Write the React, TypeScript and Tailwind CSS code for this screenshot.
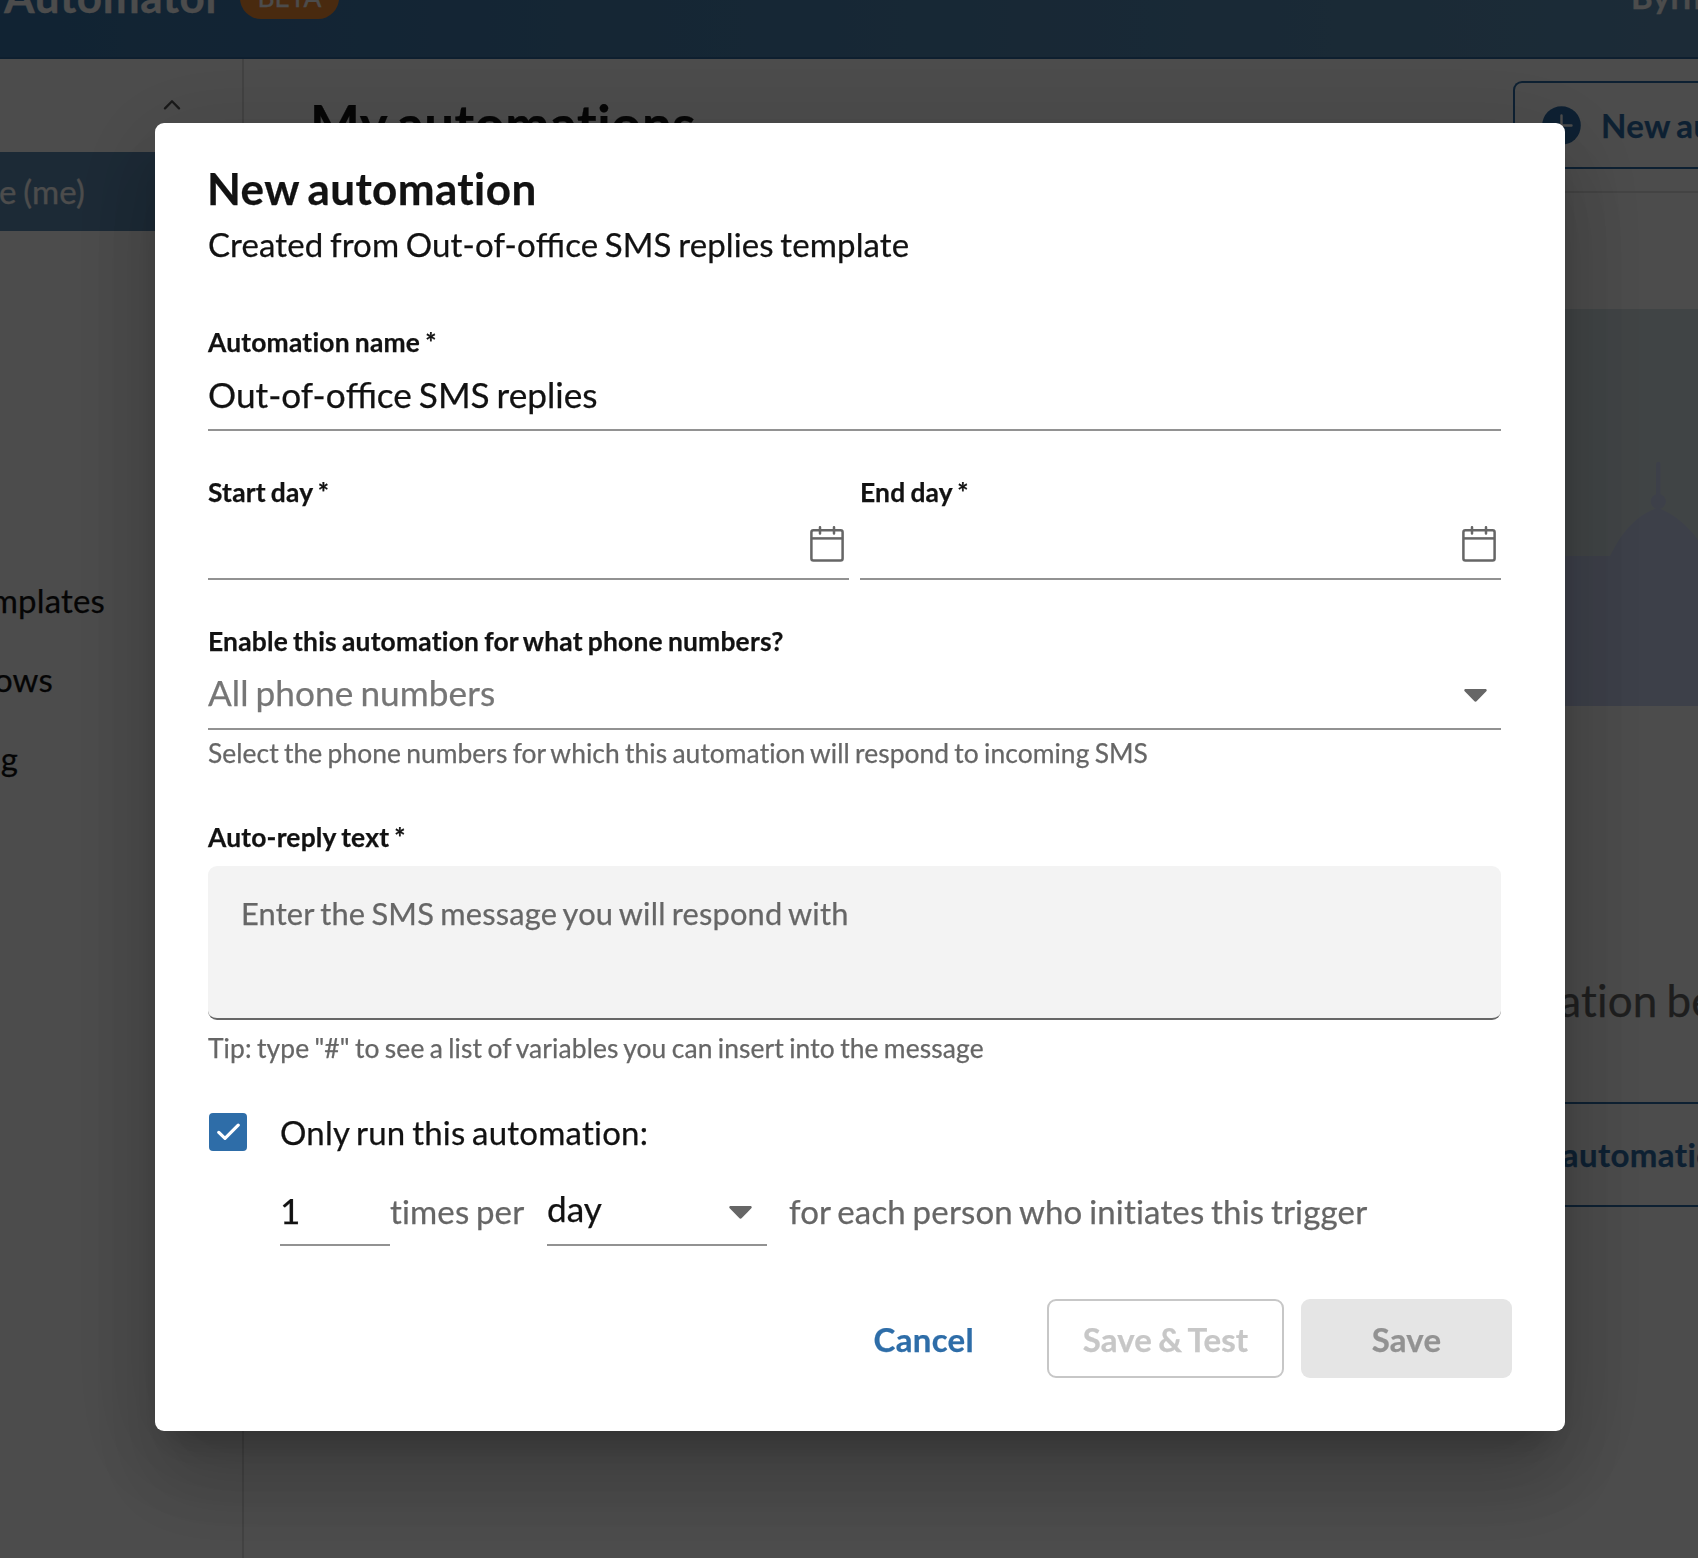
import React from "react";

function CalendarIcon() {
  return (
    <svg width="34" height="36" viewBox="0 0 34 36" fill="none" stroke="#666666" strokeWidth="2.5">
      <rect x="1.4" y="4.2" width="31.2" height="30.2" rx="2" />
      <path d="M1.4 12.4H32.6" />
      <path d="M10 1.2V7.4M24 1.2V7.4" strokeLinecap="round" />
    </svg>
  );
}

function Caret() {
  return (
    <svg width="23" height="13" viewBox="0 0 23 13" fill="#666666">
      <path d="M1.6 0H21.4C22.7 0 23.2 1.4 22.3 2.3L12.8 12.1C12.1 12.9 10.9 12.9 10.2 12.1L0.7 2.3C-0.2 1.4 0.3 0 1.6 0Z" />
    </svg>
  );
}

function Office() {
  return (
    <>
      Out-of-o<span className="tracking-normal [font-variant-ligatures:normal]">ffi</span>ce
    </>
  );
}

function Label({ children }: { children: React.ReactNode }) {
  return <label className="block text-[26.4px] leading-8 font-bold tracking-[0.21px]">{children}</label>;
}

function Background() {
  return (
    <div className="flex h-full w-full flex-col bg-white">
      <header className="flex h-[59px] shrink-0 justify-between overflow-hidden border-b-2 border-[#2f6a9f] bg-linear-to-r from-[#3976ab] to-[#5f92b8] text-white">
        <div className="-mt-[27px] flex items-start pl-1">
          <span className="w-[236px] text-[44px] leading-[46px] font-bold tracking-[0.6px]">Automator</span>
          <span className="mt-1 flex h-[42px] w-[99px] items-center justify-center rounded-full bg-[#f58c35] text-[26.4px]">
            BETA
          </span>
        </div>
        <div className="-mt-6 w-[67px] text-[33px] leading-10 font-bold tracking-[0.3px] whitespace-nowrap">Byrne</div>
      </header>

      <div className="flex min-h-0 flex-1">
        <aside className="flex w-[244px] shrink-0 flex-col border-r-2 border-[#dcdcdc] text-[33px] leading-10 tracking-[0.16px] text-[#121212]">
          <div className="flex h-[93px] justify-end pt-10 pr-[61px]">
            <svg width="18" height="11" viewBox="0 0 18 11" fill="none" stroke="#555555" strokeWidth="2.3">
              <path d="M2 9.4L9 2.2L16 9.4" strokeLinecap="round" strokeLinejoin="round" />
            </svg>
          </div>
          <div className="h-[79px] bg-[#5f8cb4] pt-[19px] text-white">
            <div className="flex w-[85px] justify-end whitespace-nowrap">Byrne (me)</div>
          </div>
          <nav className="mt-[349px] flex flex-col gap-[39px]">
            <div className="flex w-[105px] justify-end whitespace-nowrap">Templates</div>
            <div className="flex w-[53px] justify-end">ows</div>
            <div className="flex w-[18px] justify-end">g</div>
          </nav>
        </aside>

        <main className="flex min-w-0 flex-1 flex-col overflow-hidden">
          <div className="flex h-[134px] shrink-0 items-start justify-between border-b-2 border-[#e2e2e2] pt-[22px]">
            <h1 className="mt-[11px] ml-[66px] text-[52.8px] leading-[64px] font-bold tracking-[0.5px] text-[#121212]">My automations</h1>
            <div className="flex h-[88px] w-[185px] items-center rounded-l-[9px] border-2 border-r-0 border-[#2e6da8] pl-[27px] text-[#2e6da8]">
              <svg className="shrink-0" width="39" height="39" viewBox="0 0 39 39">
                <circle cx="19.5" cy="19.5" r="19.3" fill="#2e6da8" />
                <path d="M19.5 9.5V29.5M9.5 19.5H29.5" stroke="#ffffff" strokeWidth="2.4" strokeLinecap="round" />
              </svg>
              <span className="mt-px ml-5 text-[33px] font-bold tracking-[0.3px] whitespace-nowrap">New automation</span>
            </div>
          </div>
          <svg className="mt-[116px] ml-auto shrink-0" width="198" height="397" viewBox="0 0 198 397">
            <rect width="198" height="397" fill="#d8e4e8" />
            <path d="M0 247H110C122 222 138 205 158 199C174 205 188 217 198 231V397H0Z" fill="#cbd5f5" />
            <circle cx="158.3" cy="192.5" r="7.5" fill="#cbd5f5" />
            <path d="M158.3 155V190" stroke="#cbd5f5" strokeWidth="4.4" strokeLinecap="round" />
          </svg>
          <div className="mt-[267px] ml-auto w-[263px] text-[44px] leading-[54px] tracking-[0.2px] whitespace-nowrap text-[#666666]">automation before</div>
          <div className="mt-[75px] ml-auto flex h-[105px] w-[298px] items-center border-y-2 border-[#2e6da8] text-[33px] font-bold tracking-[0.4px] whitespace-nowrap text-[#2e6da8]">
            <span className="ml-[86px]">New automation</span>
          </div>
        </main>
      </div>
    </div>
  );
}

export default function App() {
  return (
    <div className="relative h-screen w-full overflow-hidden font-['Lato',sans-serif] [font-variant-ligatures:none] [-webkit-text-stroke:0.25px] [&_*]:[word-spacing:-0.06em]">
      <Background />
      <div className="fixed inset-0 flex items-start bg-black/70">
        <div
          role="dialog"
          className="mt-[123px] ml-[155px] flex h-[1308px] w-[1410px] flex-col rounded-[9px] bg-white pt-[39px] pr-16 pl-[53px] text-[#121212] shadow-[0_24px_33px_-15px_rgba(0,0,0,0.2),0_53px_84px_7px_rgba(0,0,0,0.14),0_20px_101px_18px_rgba(0,0,0,0.12)]"
        >
          <h2 className="-ml-px text-[44px] leading-[52px] font-bold tracking-[0.4px]">New automation</h2>
          <p className="mt-[10px] text-[33px] leading-10 tracking-[0.12px]">
            Created from <Office /> SMS replies template
          </p>

          <div className="mt-[62px]">
            <Label>Automation name *</Label>
          </div>
          <div className="mt-[15px] h-[58px] border-b-2 border-[#929292] text-[35.2px] leading-[42px]">
            <Office /> SMS replies
          </div>

          <div className="mt-[45px] flex gap-[11px]">
            {["Start day *", "End day *"].map((label) => (
              <div key={label} className="flex flex-1 flex-col">
                <Label>{label}</Label>
                <div className="flex h-[72px] justify-end border-b-2 border-[#929292] pt-[18px] pr-[5px]">
                  <CalendarIcon />
                </div>
              </div>
            ))}
          </div>

          <div className="mt-[45px]">
            <Label>Enable this automation for what phone numbers?</Label>
          </div>
          <div className="mt-[14px] flex h-[59px] justify-between border-b-2 border-[#929292] pr-[14px] text-[35.2px] leading-[42px] tracking-[0.07px] text-[#767676]">
            All phone numbers
            <div className="pt-[18px]"><Caret /></div>
          </div>
          <p className="mt-[7px] text-[26.4px] leading-8 tracking-[0.06px] text-[#666666]">
            Select the phone numbers for which this automation will respond to incoming SMS
          </p>

          <div className="mt-[52px]">
            <Label>Auto-reply text *</Label>
          </div>
          <div className="mt-[13px] h-[154px] rounded-[9px] border-b-2 border-[#666666] bg-[#f3f3f3] pt-[30px] pl-[33px] text-[30.8px] leading-9 tracking-[0.18px] text-[#666666]">
            Enter the SMS message you will respond with
          </div>
          <p className="mt-3 text-[26.4px] leading-8 tracking-[0.11px] text-[#666666]">
            Tip: type "#" to see a list of variables you can insert into the message
          </p>

          <div className="mt-12 flex h-10 pl-px">
            <div className="mt-px flex size-[38px] items-center justify-center rounded-[4px] bg-[#2e6da8]">
              <svg width="24" height="18" viewBox="0 0 24 18" fill="none" stroke="#ffffff" strokeWidth="3.2" strokeLinecap="round" strokeLinejoin="round">
                <path d="M2.8 9.4L9 15.4L22.2 2.2" />
              </svg>
            </div>
            <span className="ml-[33px] text-[33px] leading-10 tracking-[0.21px]">Only run this automation:</span>
          </div>

          <div className="mt-[35px] ml-[72px] flex h-[59px] text-[33px] leading-10 text-[#666666]">
            <div className="w-[110px] border-b-2 border-[#929292] pt-0.5 text-[35.2px] leading-[42px] text-[#121212]">1</div>
            <div className="w-[157px] pt-1 tracking-[0.15px]">times per</div>
            <div className="flex w-[220px] justify-between border-b-2 border-[#929292] pr-[15px] text-[35.2px] leading-[42px] text-[#121212]">
              day
              <div className="pt-[19px]"><Caret /></div>
            </div>
            <div className="ml-[22px] pt-1 tracking-[0.18px]">for each person who initiates this trigger</div>
          </div>

          <div className="mt-[53px] -mr-[11px] flex h-[79px] items-stretch justify-end text-[33px] leading-10 font-bold tracking-[0.15px]">
            <span className="mr-[73px] pt-5 tracking-[0.3px] text-[#2e6da8]">Cancel</span>
            <div className="mr-[17px] w-[237px] rounded-[9px] border-2 border-[#c7c7c7] pt-[18px] text-center text-[#c7c7c7]">Save &amp; Test</div>
            <div className="w-[211px] rounded-[9px] bg-[#e5e5e5] pt-5 text-center text-[#929292]">Save</div>
          </div>
        </div>
      </div>
    </div>
  );
}
